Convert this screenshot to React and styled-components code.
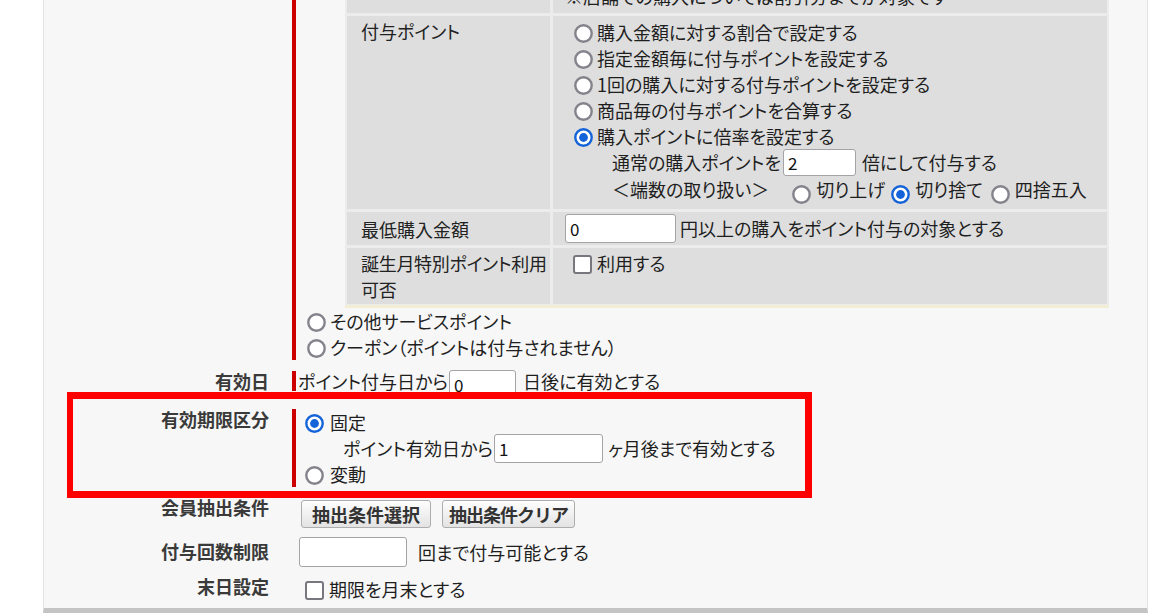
import React from "react";
import styled, { createGlobalStyle } from "styled-components";

const Global = createGlobalStyle`
  html, body { margin: 0; padding: 0; background: #fff; }
  body {
    font-family: "Noto Sans CJK JP", "Noto Sans", sans-serif;
    font-size: 18px;
    color: #1e1e1e;
    font-feature-settings: "palt";
  }
  * { box-sizing: border-box; }
`;

const Page = styled.div`
  position: relative;
  width: 1168px;
  height: 613px;
  overflow: hidden;
  background: #fff;
`;

const Panel = styled.div`
  display: flex;
  flex-direction: column;
  margin-left: 43px;
  width: 1105px;
  height: 613px;
  background: #f7f7f7;
  border-left: 1px solid #e4e4e4;
  border-right: 1px solid #e4e4e4;
  border-bottom: 5px solid #c4c4c4;
  overflow: hidden;
`;

const FieldRow = styled.div`
  display: grid;
  grid-template-columns: 248px 1fr;
  margin-top: ${(p) => p.$mt || 0}px;
  flex-shrink: 0;
`;

const Label = styled.div`
  text-align: right;
  padding-right: 23px;
  padding-top: ${(p) => p.$pt || 0}px;
  font-weight: 700;
  color: #3a3a3a;
  line-height: 20px;
  white-space: nowrap;
`;

const Value = styled.div`
  align-self: start;
  border-left: 4px solid ${(p) => (p.$required ? "#cc0000" : "transparent")};
  padding-left: 2px;
  padding-top: ${(p) => p.$pt || 0}px;
  height: ${(p) => (p.$h ? `${p.$h}px` : "auto")};
`;

const PointsTable = styled.div`
  display: grid;
  grid-template-columns: 203px 554px;
  grid-template-rows: 41px 193px 33px 56px;
  gap: 3px;
  width: max-content;
  margin-left: 47px;
  padding: 2px 2px 1px;
  background: #ececec;
  border-bottom: 3px solid #f2eed6;
`;

const TLabel = styled.div`
  background: #dedede;
  padding: ${(p) => p.$pt || 2}px 0 0 14px;
  line-height: 26px;
  color: #222;
  white-space: nowrap;
  letter-spacing: ${(p) => (p.$tight ? "-0.3px" : "normal")};
`;

const TValue = styled.div`
  background: #dedede;
  padding: ${(p) => p.$pt || 0}px 0 0 12px;
  display: flex;
  flex-direction: column;
  justify-content: ${(p) => (p.$end ? "flex-end" : "flex-start")};
  padding-bottom: ${(p) => p.$pb || 0}px;
`;

const Line = styled.div`
  display: flex;
  align-items: center;
  height: ${(p) => p.$h || 26}px;
  padding-left: ${(p) => p.$indent || 0}px;
  white-space: nowrap;
  line-height: ${(p) => p.$h || 26}px;
`;

const RadioSvg = styled.svg`
  flex-shrink: 0;
  width: 19px;
  height: 19px;
  margin-left: ${(p) => p.$ml ?? 9}px;
  margin-right: ${(p) => p.$mr ?? 4}px;
  margin-top: ${(p) => p.$mt ?? 3}px;
`;

const Radio = ({ checked, ml, mr, mt }) => (
  <RadioSvg viewBox="0 0 19 19" $ml={ml} $mr={mr} $mt={mt}>
    <circle
      cx="9.5"
      cy="9.5"
      r="8.2"
      fill="#fff"
      stroke={checked ? "#1463d8" : "#83838c"}
      strokeWidth="2.4"
    />
    {checked && <circle cx="9.5" cy="9.5" r="4.4" fill="#1463d8" />}
  </RadioSvg>
);

const Checkbox = styled.span`
  display: inline-block;
  flex-shrink: 0;
  width: 19px;
  height: 19px;
  margin-left: ${(p) => p.$ml || 0}px;
  margin-right: 5px;
  margin-top: ${(p) => p.$mt || 0}px;
  background: #fff;
  border: 2px solid #77777f;
  border-radius: 3px;
`;

const TextInput = styled.input`
  flex-shrink: 0;
  width: ${(p) => p.$w}px;
  height: ${(p) => p.$h}px;
  margin: ${(p) => p.$m || "0"};
  align-self: ${(p) => p.$self || "auto"};
  padding: 0 4px;
  border: 1px solid #a4a4a8;
  border-radius: 3px;
  background: #fff;
  font-family: "Noto Sans CJK JP", "Noto Sans", sans-serif;
  font-size: 17px;
  line-height: 22px;
  color: #111;
  outline: none;
`;

const Choice = styled.span`
  display: inline-flex;
  align-items: center;
  margin-left: ${(p) => p.$ml || 0}px;
`;

const Buttons = styled.div`
  display: flex;
  gap: 11px;
  padding-left: 3px;
`;

const Button = styled.button`
  height: 28px;
  padding: 0 ${(p) => p.$px || 10}px;
  border: 1px solid #adadad;
  border-radius: 3px;
  background: linear-gradient(#fefefe, #e3e3e3);
  font-family: "Noto Sans CJK JP", "Noto Sans", sans-serif;
  font-size: 18px;
  font-weight: 700;
  color: #333;
  line-height: 26px;
  letter-spacing: ${(p) => p.$ls || 0}px;
`;

const Highlight = styled.div`
  position: absolute;
  left: 67px;
  top: 392px;
  width: 745px;
  height: 106px;
  border-style: solid;
  border-color: #ff0000;
  border-width: 7px 7px 7px 6px;
  pointer-events: none;
`;

export default function App() {
  return (
    <>
      <Global />
      <Page>
        <Panel>
          <FieldRow $mt={-30}>
            <div />
            <Value $required>
              <PointsTable>
                <TLabel />
                <TValue $end $pb={4}>
                  <Line>※店舗での購入については割引分までが対象です</Line>
                </TValue>

                <TLabel>付与ポイント</TLabel>
                <TValue $pt={3}>
                  <Line>
                    <Radio />
                    購入金額に対する割合で設定する
                  </Line>
                  <Line>
                    <Radio />
                    指定金額毎に付与ポイントを設定する
                  </Line>
                  <Line>
                    <Radio />
                    1回の購入に対する付与ポイントを設定する
                  </Line>
                  <Line>
                    <Radio />
                    商品毎の付与ポイントを合算する
                  </Line>
                  <Line>
                    <Radio checked />
                    購入ポイントに倍率を設定する
                  </Line>
                  <Line $h={27} $indent={47}>
                    通常の購入ポイントを
                    <TextInput $w={73} $h={27} $m="0 6px 0 2px" defaultValue="2" />
                    倍にして付与する
                  </Line>
                  <Line $h={27} $indent={47}>
                    ＜端数の取り扱い＞
                    <Choice $ml={17}>
                      <Radio ml={6} mr={5} mt={10} />
                      切り上げ
                    </Choice>
                    <Choice $ml={1}>
                      <Radio ml={5} mr={5} mt={10} checked />
                      切り捨て
                    </Choice>
                    <Choice $ml={3}>
                      <Radio ml={5} mr={5} mt={10} />
                      四捨五入
                    </Choice>
                  </Line>
                </TValue>

                <TLabel $pt={4}>最低購入金額</TLabel>
                <TValue $pt={2}>
                  <Line $h={29}>
                    <TextInput $w={111} $h={29} $m="0 4px 0 0" defaultValue="0" />
                    円以上の購入をポイント付与の対象とする
                  </Line>
                </TValue>

                <TLabel $tight>
                  誕生月特別ポイント利用
                  <br />
                  可否
                </TLabel>
                <TValue $pt={2}>
                  <Line>
                    <Checkbox $ml={8} $mt={2} />
                    利用する
                  </Line>
                </TValue>
              </PointsTable>
              <Line>
                <Radio ml={9} />
                その他サービスポイント
              </Line>
              <Line>
                <Radio ml={9} />
                クーポン（ポイントは付与されません）
              </Line>
            </Value>
          </FieldRow>

          <FieldRow $mt={11}>
            <Label>有効日</Label>
            <Value $required $h={20}>
              <Line $h={20}>
                ポイント付与日から
                <TextInput $w={67} $h={28} $m="-1px 7px 0 1px" $self="flex-start" defaultValue="0" />
                日後に有効とする
              </Line>
            </Value>
          </FieldRow>

          <FieldRow $mt={18}>
            <Label>有効期限区分</Label>
            <Value $required>
              <Line>
                <Radio ml={7} mr={6} checked />
                固定
              </Line>
              <Line $indent={45}>
                ポイント有効日から
                <TextInput $w={109} $h={29} $m="0 5px 0 1px" defaultValue="1" />
                ヶ月後まで有効とする
              </Line>
              <Line>
                <Radio ml={7} mr={6} />
                変動
              </Line>
            </Value>
          </FieldRow>

          <FieldRow $mt={10}>
            <Label>会員抽出条件</Label>
            <Value $pt={3}>
              <Buttons>
                <Button>抽出条件選択</Button>
                <Button $px={6} $ls={-1}>抽出条件クリア</Button>
              </Buttons>
            </Value>
          </FieldRow>

          <FieldRow $mt={9}>
            <Label $pt={4}>付与回数制限</Label>
            <Value>
              <Line $h={30}>
                <TextInput $w={108} $h={30} $m="0 11px 0 1px" />
                回まで付与可能とする
              </Line>
            </Value>
          </FieldRow>

          <FieldRow $mt={5}>
            <Label $pt={4}>末日設定</Label>
            <Value $pt={7}>
              <Line $h={20}>
                <Checkbox $ml={7} $mt={2} />
                期限を月末とする
              </Line>
            </Value>
          </FieldRow>
        </Panel>
        <Highlight />
      </Page>
    </>
  );
}
